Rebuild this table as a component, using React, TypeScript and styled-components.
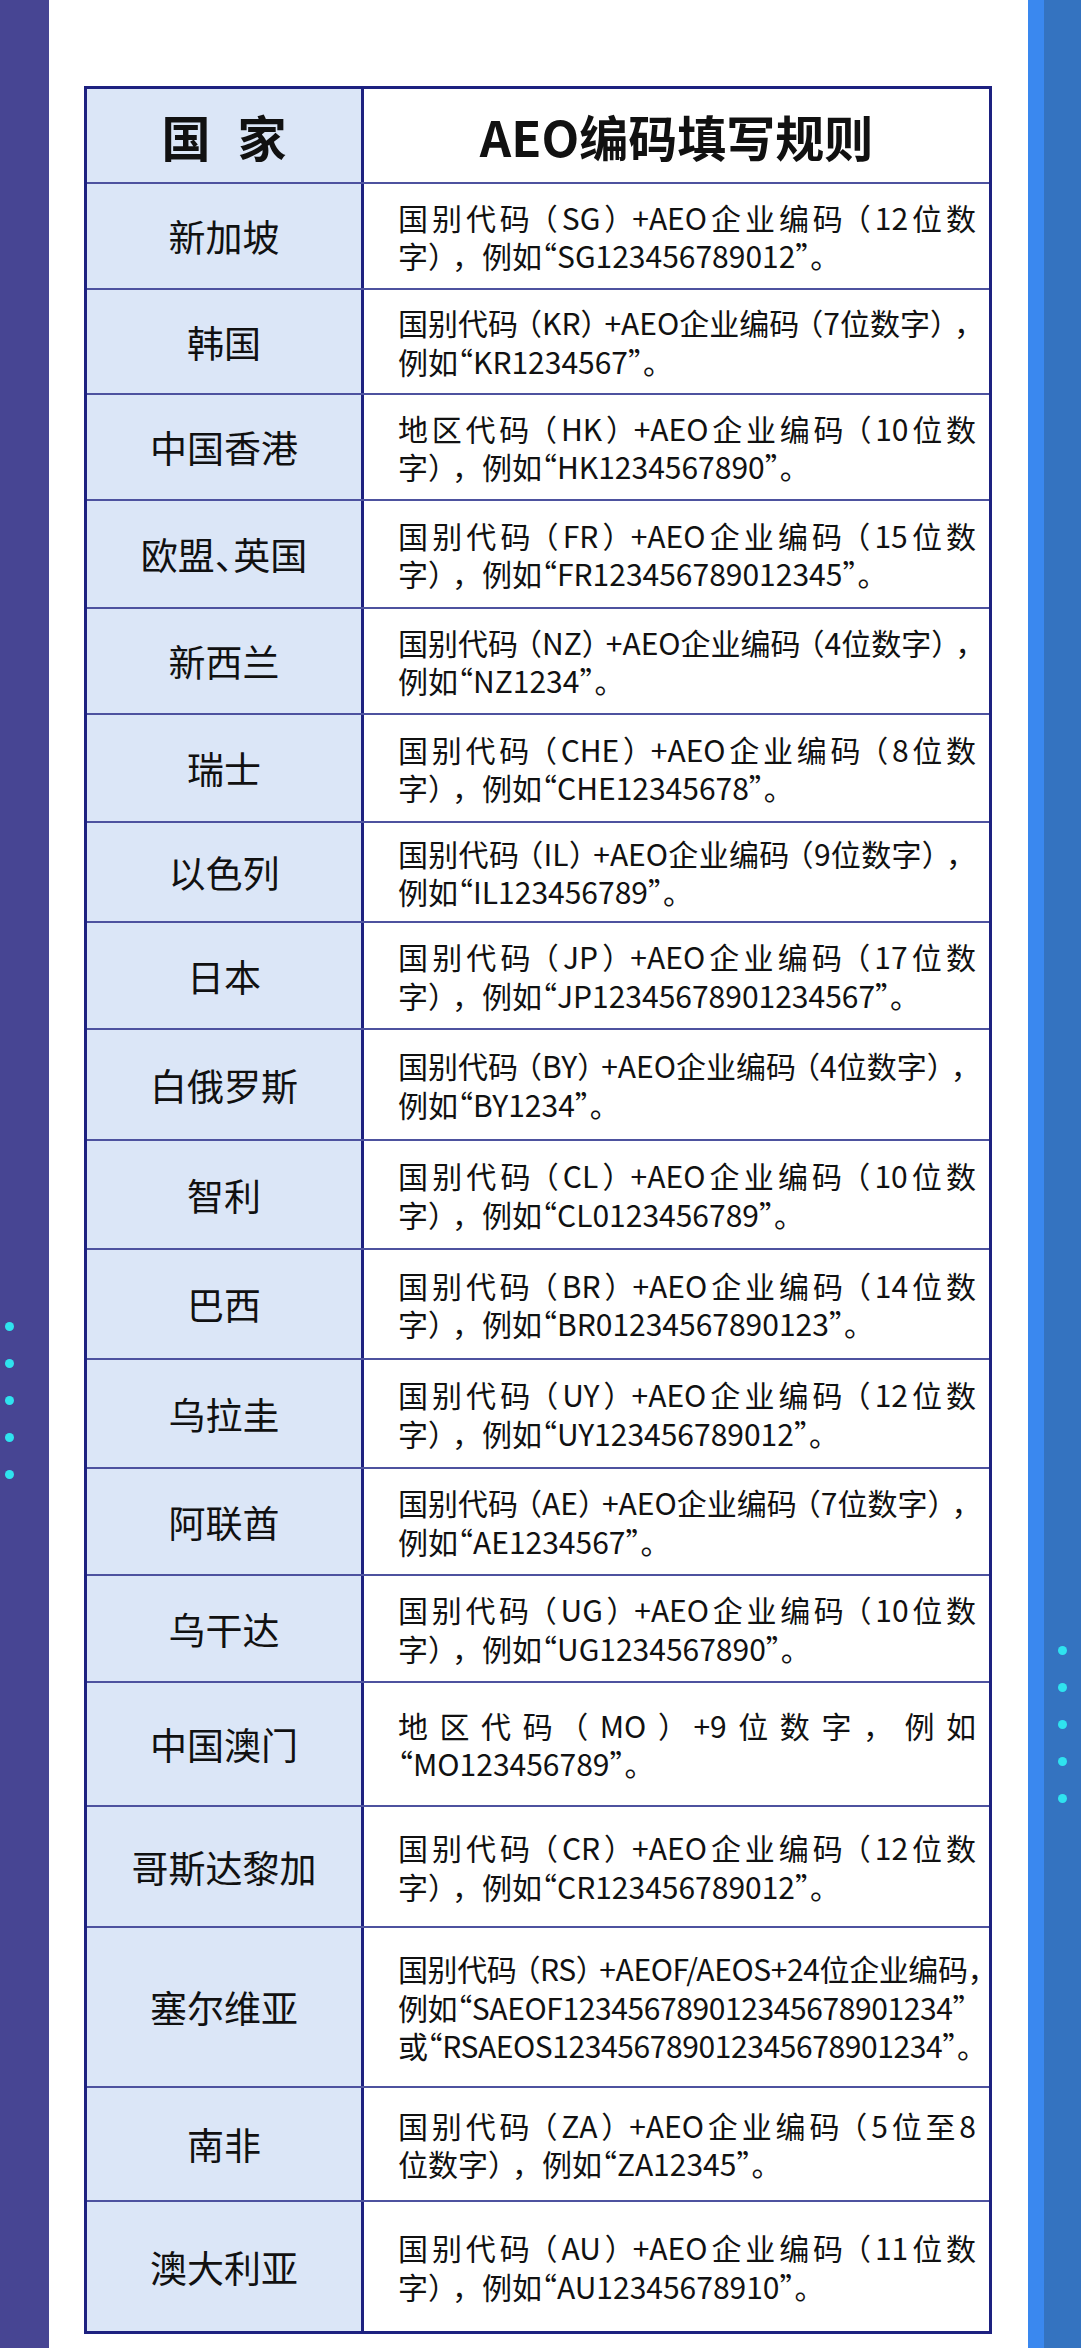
import React from 'react';
import styled, {createGlobalStyle} from "styled-components";

const GlobalStyle = createGlobalStyle`
  html, body {
    margin: 0;
    padding: 0;
    background: #fff;
  }

  body {
    font-family: "Noto Sans CJK SC", "Noto Sans", sans-serif;
    color: #111;
  }
`

const Page = styled.div`
  display: flex;
  width: 1081px;
  min-height: 2348px;
`

const LeftRail = styled.div`
  width: 49px;
  flex-shrink: 0;
  background: #474593;
  display: flex;
  flex-direction: column;
  align-items: flex-start;
  gap: 28px;
  padding: 1322px 0 0 5px;
  box-sizing: border-box;
`

const RightRail = styled.div`
  width: 53px;
  flex-shrink: 0;
  display: flex;
`

const LightBand = styled.div`
  width: 16px;
  background: #3a88ef;
`

const DarkBand = styled.div`
  flex: 1;
  background: #3473c0;
  display: flex;
  flex-direction: column;
  align-items: center;
  gap: 28px;
  padding-top: 1646px;
`

const Dot = styled.span`
  display: block;
  width: 9px;
  height: 9px;
  border-radius: 50%;
  background: #2fe3ef;
`

const Main = styled.div`
  flex: 1;
  padding: 86px 36px 0 35px;
`

const Table = styled.div`
  width: 908px;
  box-sizing: border-box;
  border: 3px solid #1d2180;
`

const Row = styled.div<{ $h: number; $first?: boolean }>`
  display: grid;
  grid-template-columns: 277px 1fr;
  height: ${p => p.$h}px;
  box-sizing: border-box;
  border-top: ${p => (p.$first ? 'none' : '2px solid #4d529f')};
`

const CountryCell = styled.div`
  background: #dbe6f7;
  border-right: 3px solid #1d2180;
  display: flex;
  align-items: center;
  justify-content: center;
  font-size: 37px;
  font-feature-settings: "halt";
`

const HeadTitle = styled.div`
  display: flex;
  align-items: center;
  justify-content: center;
  font-size: 49px;
  font-weight: 700;
`

const HeadGap = styled.div`
  display: flex;
  gap: 27px;
`

const RuleCell = styled.div<{ $tight?: boolean }>`
  display: flex;
  flex-direction: column;
  justify-content: center;
  padding: 0 13px 0 34px;
  font-size: 30px;
  line-height: 38.5px;
  letter-spacing: ${p => (p.$tight ? '-0.4px' : 'normal')};
`

const Line = styled.span<{ $fill: boolean }>`
  display: block;
  white-space: nowrap;
  text-align: justify;
  text-align-last: ${p => (p.$fill ? 'justify' : 'left')};
`

// half-width punctuation, with a little air kept on the outer side of brackets
const Punct = styled.span<{ $kind: 'open' | 'close' | 'quote' }>`
  font-feature-settings: "halt";
  padding-left: ${p => (p.$kind === 'open' ? '9px' : '0')};
  padding-right: ${p => (p.$kind === 'close' ? '9px' : '0')};
`

const renderLine = (text: string) =>
  text.split(/([（）“”])/).filter(Boolean).map((part, i) => {
    if (part === '（') return <Punct key={i} $kind="open">{part}</Punct>
    if (part === '）') return <Punct key={i} $kind="close">{part}</Punct>
    if (part === '“' || part === '”') return <Punct key={i} $kind="quote">{part}</Punct>
    return <React.Fragment key={i}>{part}</React.Fragment>
  })

type Rule = { country: string; h: number; lines: string[]; tight?: boolean; loose?: boolean }

const rules: Rule[] = [
  {country: '新加坡', h: 106, lines: ['国别代码（SG）+AEO企业编码（12位数', '字），例如“SG123456789012”。']},
  {country: '韩国', h: 105, lines: ['国别代码（KR）+AEO企业编码（7位数字），', '例如“KR1234567”。']},
  {country: '中国香港', h: 106, lines: ['地区代码（HK）+AEO企业编码（10位数', '字），例如“HK1234567890”。']},
  {country: '欧盟、英国', h: 108, lines: ['国别代码（FR）+AEO企业编码（15位数', '字），例如“FR123456789012345”。']},
  {country: '新西兰', h: 106, lines: ['国别代码（NZ）+AEO企业编码（4位数字），', '例如“NZ1234”。']},
  {country: '瑞士', h: 108, lines: ['国别代码（CHE）+AEO企业编码（8位数', '字），例如“CHE12345678”。']},
  {country: '以色列', h: 100, lines: ['国别代码（IL）+AEO企业编码（9位数字），', '例如“IL123456789”。']},
  {country: '日本', h: 107, lines: ['国别代码（JP）+AEO企业编码（17位数', '字），例如“JP12345678901234567”。']},
  {country: '白俄罗斯', h: 111, lines: ['国别代码（BY）+AEO企业编码（4位数字），', '例如“BY1234”。']},
  {country: '智利', h: 109, lines: ['国别代码（CL）+AEO企业编码（10位数', '字），例如“CL0123456789”。']},
  {country: '巴西', h: 110, lines: ['国别代码（BR）+AEO企业编码（14位数', '字），例如“BR01234567890123”。']},
  {country: '乌拉圭', h: 109, lines: ['国别代码（UY）+AEO企业编码（12位数', '字），例如“UY123456789012”。']},
  {country: '阿联酋', h: 107, lines: ['国别代码（AE）+AEO企业编码（7位数字），', '例如“AE1234567”。']},
  {country: '乌干达', h: 107, lines: ['国别代码（UG）+AEO企业编码（10位数', '字），例如“UG1234567890”。']},
  {country: '中国澳门', h: 124, lines: ['地区代码（MO）+9位数字，例如', '“MO123456789”。']},
  {country: '哥斯达黎加', h: 121, lines: ['国别代码（CR）+AEO企业编码（12位数', '字），例如“CR123456789012”。']},
  {
    country: '塞尔维亚',
    h: 160,
    tight: true,
    loose: true,
    lines: [
      '国别代码（RS）+AEOF/AEOS+24位企业编码，',
      '例如“SAEOF123456789012345678901234”',
      '或“RSAEOS123456789012345678901234”。',
    ],
  },
  {country: '南非', h: 114, lines: ['国别代码（ZA）+AEO企业编码（5位至8', '位数字），例如“ZA12345”。']},
  {country: '澳大利亚', h: 131, lines: ['国别代码（AU）+AEO企业编码（11位数', '字），例如“AU12345678910”。']},
]

const dots = [0, 1, 2, 3, 4]

const App: React.FC = () => {
  return (
    <>
      <GlobalStyle/>
      <Page>
        <LeftRail>
          {dots.map(i => <Dot key={i}/>)}
        </LeftRail>
        <Main>
          <Table>
            <Row $h={93} $first>
              <CountryCell>
                <HeadTitle>
                  <HeadGap><span>国</span><span>家</span></HeadGap>
                </HeadTitle>
              </CountryCell>
              <HeadTitle>AEO编码填写规则</HeadTitle>
            </Row>
            {rules.map(rule => (
              <Row key={rule.country} $h={rule.h}>
                <CountryCell>{rule.country}</CountryCell>
                <RuleCell $tight={rule.tight}>
                  {rule.lines.map((line, i) => (
                    <Line key={i} $fill={rule.loose ? i === 0 : i < rule.lines.length - 1}>
                      {renderLine(line)}
                    </Line>
                  ))}
                </RuleCell>
              </Row>
            ))}
          </Table>
        </Main>
        <RightRail>
          <LightBand/>
          <DarkBand>
            {dots.map(i => <Dot key={i}/>)}
          </DarkBand>
        </RightRail>
      </Page>
    </>
  );
};

export default App;
